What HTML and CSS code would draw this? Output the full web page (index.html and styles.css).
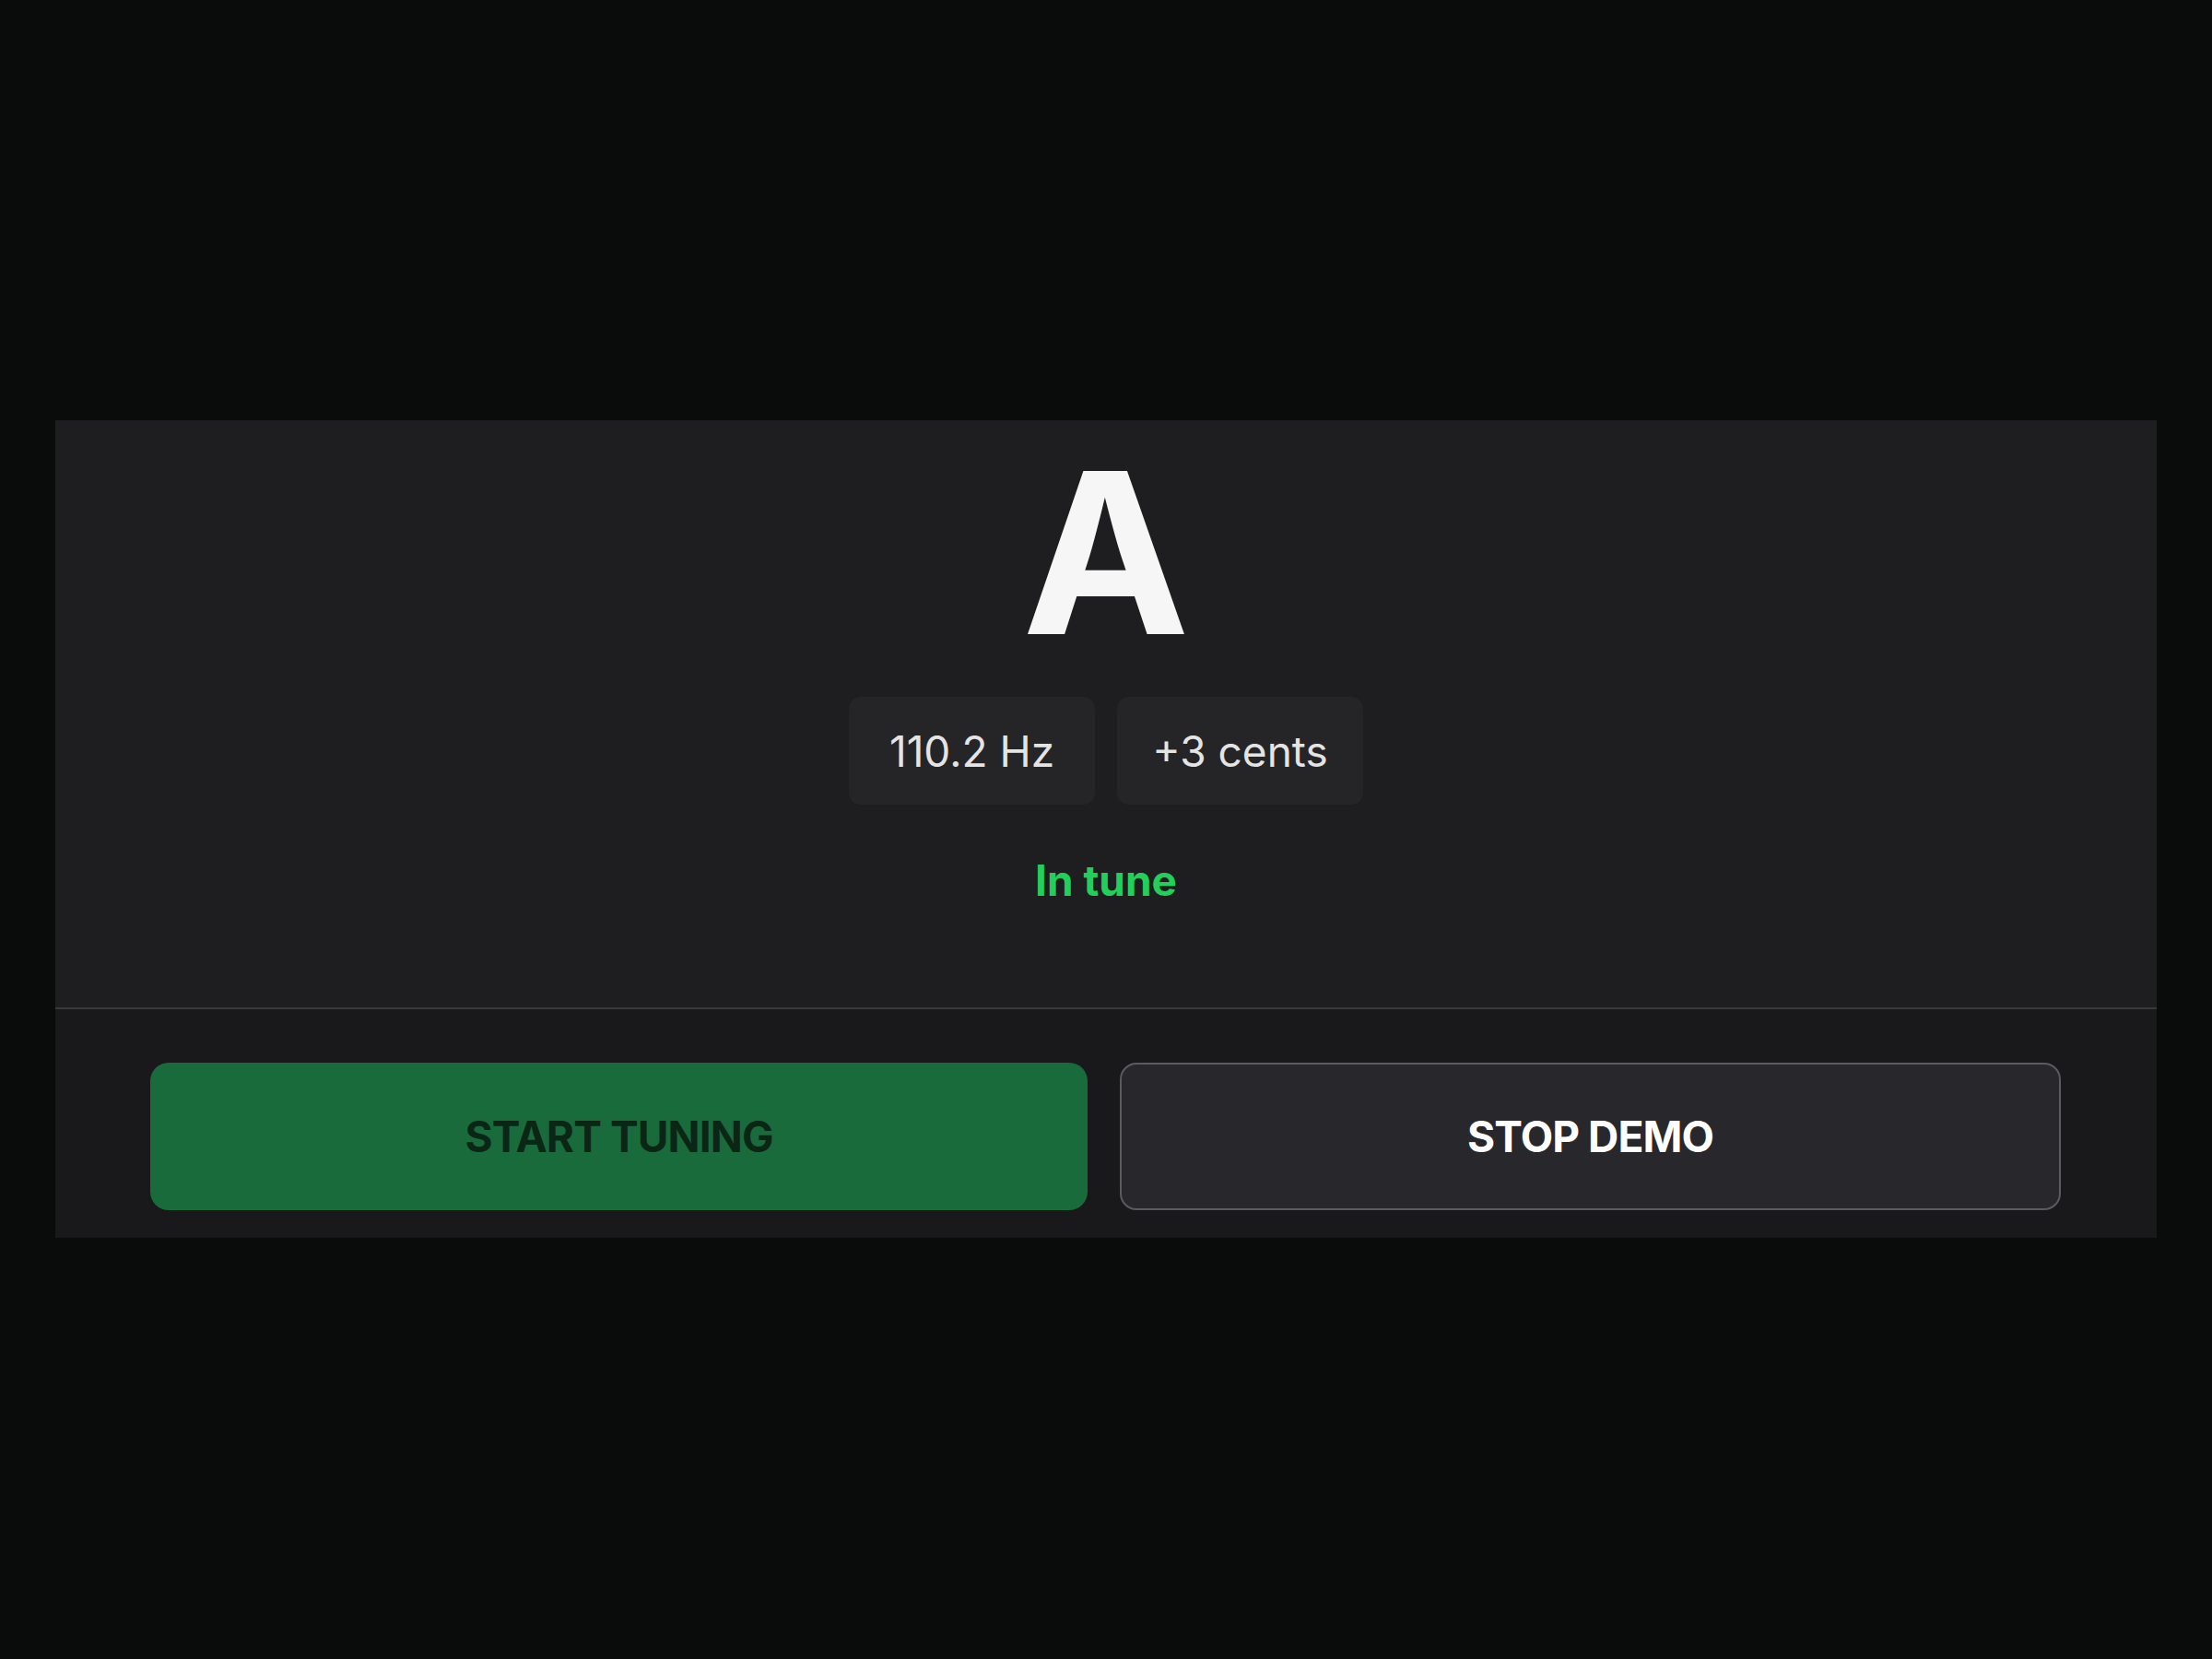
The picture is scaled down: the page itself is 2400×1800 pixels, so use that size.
FILE: index.html
```html
<!DOCTYPE html>
<html lang="en">
<head>
<meta charset="utf-8">
<title>Tuner</title>
<link rel="stylesheet" href="styles.css">
</head>
<body>
<main class="tuner">
  <section class="readout">
    <div class="note">A</div>
    <div class="stats">
      <div class="pill">110.2 Hz</div>
      <div class="pill">+3 cents</div>
    </div>
    <div class="status">In tune</div>
  </section>
  <footer class="actions">
    <button class="btn btn-primary">START TUNING</button>
    <button class="btn btn-secondary">STOP DEMO</button>
  </footer>
</main>
</body>
</html>
```
FILE: styles.css
```css
html, body {
  margin: 0;
  padding: 0;
  background: #0a0c0c;
  width: 2400px;
  height: 1800px;
  font-family: "Inter", "Liberation Sans", sans-serif;
}

.tuner {
  margin: 456px 60px 0 60px;
  width: 2280px;
  background: #1e1e20;
}

.readout {
  height: 639px;
  box-sizing: border-box;
  padding-top: 23px;
  display: flex;
  flex-direction: column;
  align-items: center;
  border-bottom: 2px solid #3a3a3d;
}

.note {
  font-size: 243px;
  line-height: 1;
  font-weight: 700;
  color: #f6f6f6;
}

.stats {
  margin-top: 34px;
  display: flex;
  gap: 24px;
}

.pill {
  height: 117px;
  width: 267px;
  display: flex;
  align-items: center;
  justify-content: center;
  background: #252528;
  border-radius: 13px;
  font-size: 46px;
  font-weight: 400;
  color: #e4e4e4;
}

.status {
  margin-top: 59px;
  font-size: 46px;
  line-height: 1;
  font-weight: 700;
  color: #22cf5b;
}

.actions {
  background: #19191b;
  padding: 58px 104px 30px 103px;
  display: flex;
  gap: 35px;
}

.btn {
  flex: 1;
  height: 160px;
  border-radius: 20px;
  font-family: "Inter", "Liberation Sans", sans-serif;
  font-size: 46px;
  font-weight: 700;
  letter-spacing: -0.9px;
  cursor: pointer;
}

.btn-primary {
  background: #1a6b3b;
  border: none;
  color: #0c2615;
}

.btn-secondary {
  background: #28282c;
  border: 2px solid #5a5a5f;
  border-radius: 18px;
  color: #ffffff;
}
```
